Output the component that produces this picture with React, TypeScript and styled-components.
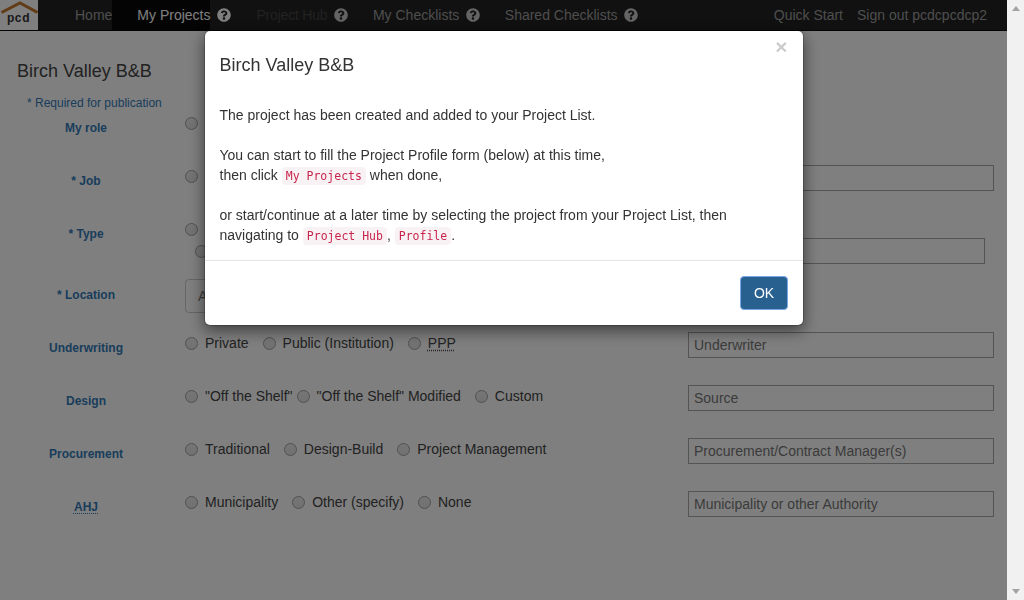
import React from "react"
import styled, { createGlobalStyle } from "styled-components"
import { FaQuestionCircle } from "react-icons/fa"

const Global = createGlobalStyle`
   html, body {
      margin: 0;
      height: 100%;
      overflow: hidden;
   }
   body {
      font-family: "Liberation Sans", Arial, sans-serif;
      font-size: 14px;
      line-height: 20px;
      color: #333;
   }
`

const Shell = styled.div`
   display: flex;
   height: 600px;
`

const Page = styled.div`
   flex: 1;
   min-width: 0;
   background: #fff;
   color: #444;
`

const Scrollbar = styled.div`
   width: 17px;
   background: #f1f1f1;
   display: flex;
   flex-direction: column;
   justify-content: space-between;
   align-items: center;
   padding: 6px 0;
   box-sizing: border-box;
`

const Arrow = styled.span<{ $down?: boolean }>`
   width: 0;
   height: 0;
   border-left: 4px solid transparent;
   border-right: 4px solid transparent;
   ${({ $down }) => ($down ? "border-top: 5px solid #a3a3a3;" : "border-bottom: 5px solid #a3a3a3;")}
`

const Navbar = styled.nav`
   display: flex;
   height: 31px;
   box-sizing: border-box;
   background: #222;
   border-bottom: 1px solid #080808;
`

const Logo = styled.svg`
   width: 38px;
   height: 30px;
   flex: none;
   background: #fff;
`

const NavItems = styled.div`
   display: flex;
   padding-left: 12px;
`

const NavItem = styled.div`
   display: flex;
   align-items: center;
`

const NavLink = styled.a<{ $active?: boolean; $disabled?: boolean }>`
   display: block;
   line-height: 30px;
   padding-left: 25px;
   letter-spacing: ${({ $disabled }) => ($disabled ? "-0.2px" : "normal")};
   color: ${({ $active, $disabled }) => ($active ? "#fff" : $disabled ? "#444" : "#9d9d9d")};
   background: ${({ $active }) => ($active ? "#080808" : "transparent")};
`

const Help = styled(FaQuestionCircle)<{ $active?: boolean }>`
   width: 14px;
   height: 14px;
   margin-left: ${({ $active }) => ($active ? 7 : 6.5)}px;
   color: ${({ $active }) => ($active ? "#fff" : "#c8c8c8")};
`

const NavRight = styled.div`
   display: flex;
   gap: 14px;
   margin-left: auto;
   padding-right: 20px;
   line-height: 30px;
   color: #9d9d9d;
`

const Heading = styled.h3`
   margin: 0;
   padding: 30px 0 0 17px;
   font-size: 18px;
   font-weight: 400;
   line-height: 20px;
`

const Required = styled.p`
   margin: 0;
   padding: 12px 0 0 27px;
   height: 19px;
   font-size: 12px;
   line-height: 20px;
   color: #337ab7;
`

const Form = styled.form`
   display: flex;
   flex-direction: column;
`

const Row = styled.div<{ $tall?: boolean }>`
   display: grid;
   grid-template-columns: 185px 503px 306px;
   height: ${({ $tall }) => ($tall ? 61 : 53)}px;
`

const Label = styled.div`
   padding: 6px 30px 0 17px;
   font-size: 12px;
   font-weight: 700;
   text-align: center;
   color: #337ab7;
`

const Abbr = styled.span`
   text-decoration: underline dotted;
   text-underline-offset: 2px;
`

const Options = styled.div`
   display: flex;
   flex-wrap: wrap;
   align-content: flex-start;
`

const Option = styled.label<{ $tight?: boolean; $full?: boolean }>`
   display: flex;
   align-items: center;
   height: 22px;
   margin-right: ${({ $tight }) => ($tight ? 4 : 14)}px;
   flex-basis: ${({ $full }) => ($full ? "100%" : "auto")};
`

const Radio = styled.input.attrs({ type: "radio" })`
   appearance: none;
   width: 13px;
   height: 13px;
   margin: 0 7px 0 0;
   box-sizing: border-box;
   border: 1px solid #a0a0a0;
   border-radius: 50%;
   background: linear-gradient(#ececec, #e2e2e2);
`

const IndentedRadio = styled(Radio)`
   margin: 0 0 0 10px;
`

const TextInput = styled.input<{ $short?: boolean; $low?: boolean }>`
   width: ${({ $short }) => ($short ? 297 : 306)}px;
   height: 26px;
   margin-top: ${({ $low }) => ($low ? 20 : 0)}px;
   box-sizing: border-box;
   padding: 0 5px;
   border: 1px solid #a9a9a9;
   font: inherit;
   color: #333;
   &::placeholder {
      color: #777;
   }
`

const Location = styled.input`
   width: 400px;
   height: 34px;
   box-sizing: border-box;
   padding: 0 12px;
   border: 1px solid #ccc;
   border-radius: 4px;
   font: inherit;
   &::placeholder {
      color: #777;
   }
`

const Backdrop = styled.div`
   position: fixed;
   inset: 0 17px 0 0;
   background: rgba(0, 0, 0, 0.5);
`

const ModalLayer = styled.div`
   position: fixed;
   inset: 0 17px 0 0;
   display: flex;
   justify-content: center;
   align-items: flex-start;
   padding-top: 30px;
`

const Modal = styled.div`
   width: 600px;
   box-sizing: border-box;
   background: #fff;
   background-clip: padding-box;
   border: 1px solid rgba(0, 0, 0, 0.2);
   border-radius: 6px;
   box-shadow: 0 5px 15px rgba(0, 0, 0, 0.5);
`

const ModalHeader = styled.div`
   display: flex;
   justify-content: space-between;
   align-items: flex-start;
   height: 59px;
   box-sizing: border-box;
   padding: 5px 15px 0;
`

const ModalTitle = styled.h4`
   margin: 19px 0 0;
   font-size: 18px;
   font-weight: 400;
   line-height: 20px;
`

const Close = styled.button`
   padding: 0;
   border: 0;
   background: none;
   font: 700 21px/21px "Liberation Sans", Arial, sans-serif;
   color: #000;
   opacity: 0.2;
`

const ModalBody = styled.div`
   padding: 15px;
`

const Para = styled.p`
   margin: 0 0 20px;
   &:last-child {
      margin-bottom: 0;
   }
`

const Code = styled.code`
   padding: 2px 4px;
   border-radius: 4px;
   background: #f9f2f4;
   color: #c7254e;
   font-family: "DejaVu Sans Mono", "Liberation Mono", monospace;
   font-size: 11.5px;
   line-height: 1;
`

const ModalFooter = styled.div`
   display: flex;
   justify-content: flex-end;
   padding: 15px;
   border-top: 1px solid #e5e5e5;
`

const OkButton = styled.button`
   width: 48px;
   height: 34px;
   padding: 0 0 0 1px;
   border: 1px solid #7aa7e6;
   border-radius: 4px;
   background: #286090;
   color: #fff;
   font: inherit;
`

const NAV = [
   { label: "Home" },
   { label: "My Projects", active: true, help: true },
   { label: "Project Hub", disabled: true, help: true },
   { label: "My Checklists", help: true },
   { label: "Shared Checklists", help: true },
]

interface ChoiceRow {
   label: React.ReactNode
   placeholder: string
   options: { text: React.ReactNode; tight?: boolean }[]
}

const CHOICES: ChoiceRow[] = [
   {
      label: "Underwriting",
      placeholder: "Underwriter",
      options: [{ text: "Private" }, { text: "Public (Institution)" }, { text: <Abbr>PPP</Abbr> }],
   },
   {
      label: "Design",
      placeholder: "Source",
      options: [{ text: '"Off the Shelf"', tight: true }, { text: '"Off the Shelf" Modified' }, { text: "Custom" }],
   },
   {
      label: "Procurement",
      placeholder: "Procurement/Contract Manager(s)",
      options: [{ text: "Traditional" }, { text: "Design-Build" }, { text: "Project Management" }],
   },
   {
      label: <Abbr>AHJ</Abbr>,
      placeholder: "Municipality or other Authority",
      options: [{ text: "Municipality" }, { text: "Other (specify)" }, { text: "None" }],
   },
]

export default function App() {
   return (
      <Shell>
         <Global />
         <Page>
            <Navbar>
               <Logo viewBox="0 0 38 30">
                  <path d="M1.5 12.5 L20 3 L37.5 12.5" fill="none" stroke="#c4782c" strokeWidth="3" />
                  <text x="18.5" y="22" textAnchor="middle" fontFamily="Liberation Sans" fontWeight="700" fontSize="12" letterSpacing="0.6" fill="#333">
                     pcd
                  </text>
               </Logo>
               <NavItems>
                  {NAV.map((item) => (
                     <NavItem key={item.label}>
                        <NavLink $active={item.active} $disabled={item.disabled}>{item.label}</NavLink>
                        {item.help && <Help $active={item.active} />}
                     </NavItem>
                  ))}
               </NavItems>
               <NavRight>
                  <span>Quick Start</span>
                  <span>Sign out pcdcpcdcp2</span>
               </NavRight>
            </Navbar>
            <Heading>Birch Valley B&amp;B</Heading>
            <Required>* Required for publication</Required>
            <Form>
               <Row>
                  <Label>My role</Label>
                  <Options><Option><Radio /></Option></Options>
               </Row>
               <Row>
                  <Label>* Job</Label>
                  <Options><Option><Radio /></Option></Options>
                  <TextInput />
               </Row>
               <Row $tall>
                  <Label>* Type</Label>
                  <Options>
                     <Option><Radio /></Option>
                     <Option $full><IndentedRadio /></Option>
                  </Options>
                  <TextInput $short $low />
               </Row>
               <Row>
                  <Label>* Location</Label>
                  <Options><Location placeholder="Address" /></Options>
               </Row>
               {CHOICES.map((row) => (
                  <Row key={row.placeholder}>
                     <Label>{row.label}</Label>
                     <Options>
                        {row.options.map((opt, i) => (
                           <Option key={i} $tight={opt.tight}>
                              <Radio />
                              {opt.text}
                           </Option>
                        ))}
                     </Options>
                     <TextInput placeholder={row.placeholder} />
                  </Row>
               ))}
            </Form>
         </Page>
         <Scrollbar>
            <Arrow />
            <Arrow $down />
         </Scrollbar>
         <Backdrop />
         <ModalLayer>
            <Modal>
               <ModalHeader>
                  <ModalTitle>Birch Valley B&amp;B</ModalTitle>
                  <Close>×</Close>
               </ModalHeader>
               <ModalBody>
                  <Para>The project has been created and added to your Project List.</Para>
                  <Para>
                     You can start to fill the Project Profile form (below) at this time,
                     <br />
                     then click <Code>My Projects</Code> when done,
                  </Para>
                  <Para>
                     or start/continue at a later time by selecting the project from your Project List, then
                     navigating to <Code>Project Hub</Code>, <Code>Profile</Code>.
                  </Para>
               </ModalBody>
               <ModalFooter>
                  <OkButton>OK</OkButton>
               </ModalFooter>
            </Modal>
         </ModalLayer>
      </Shell>
   )
}
